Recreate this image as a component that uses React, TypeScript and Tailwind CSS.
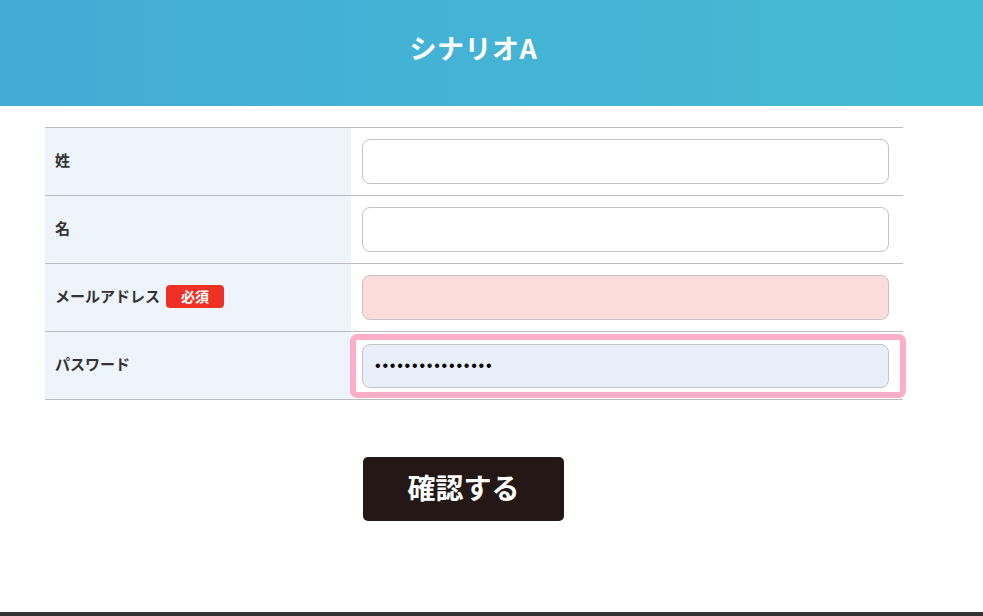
import React from "react";

const font = { fontFamily: '"Noto Sans CJK JP", "Noto Sans", sans-serif' };

function Row({
  label,
  required,
  children,
}: {
  label: string;
  required?: boolean;
  children: React.ReactNode;
}) {
  return (
    <div className="flex border-b border-[#bdbdbd] h-[68px]">
      <div className="w-[306px] shrink-0 bg-[#edf4fb] flex items-center pl-[10px] gap-[6px] pb-[3px]">
        <span className="text-[15px] font-bold text-[#333]">{label}</span>
        {required && (
          <span className="bg-[#ee3124] text-white text-[14px] font-bold rounded-[4px] px-[15px] h-[23px] flex items-center mt-[1px]">
            必須
          </span>
        )}
      </div>
      <div className="flex-1 flex items-center">{children}</div>
    </div>
  );
}

export default function App() {
  return (
    <div className="w-[983px] h-[616px] bg-white flex flex-col overflow-hidden" style={font}>
      <header className="h-[106px] shrink-0 bg-gradient-to-r from-[#43abd6] to-[#45bbd3] flex items-center justify-center pr-[36px] pb-[10px]">
        <h1 className="text-white text-[27px] font-bold tracking-[0.5px]">シナリオA</h1>
      </header>

      <main className="flex-1 flex flex-col">
        <div className="w-[858px] ml-[45px] mt-[21px] border-t border-[#bdbdbd]">
          <Row label="姓">
            <input className="ml-[11px] w-[527px] h-[45px] rounded-[8px] border border-[#c4c4c4] bg-white" />
          </Row>
          <Row label="名">
            <input className="ml-[11px] w-[527px] h-[45px] rounded-[8px] border border-[#c4c4c4] bg-white" />
          </Row>
          <Row label="メールアドレス" required>
            <input className="ml-[11px] w-[527px] h-[45px] rounded-[8px] border border-[#c4c4c4] bg-[#ffdcdc]" />
          </Row>
          <Row label="パスワード">
            <div className="-ml-[1px] w-[556px] h-[64px] border-[6px] border-[#ffaec9] rounded-[7px] bg-white pl-[6px] pt-[4px]">
              <input
                type="password"
                defaultValue="passwordpassword"
                className="w-[527px] h-[44px] rounded-[8px] border border-[#c4c4c4] bg-[#e8effa] px-[12px] text-[16px] tracking-[1.8px] text-black outline-none"
                style={{ fontFamily: '"Liberation Sans", sans-serif' }}
              />
            </div>
          </Row>
        </div>

        <button className="mt-[57px] ml-[363px] w-[201px] h-[64px] bg-[#231815] rounded-[5px] text-white text-[28px] font-bold pb-[4px]">
          確認する
        </button>
      </main>

      <footer className="h-[4px] shrink-0 bg-[#333333]" />
    </div>
  );
}
